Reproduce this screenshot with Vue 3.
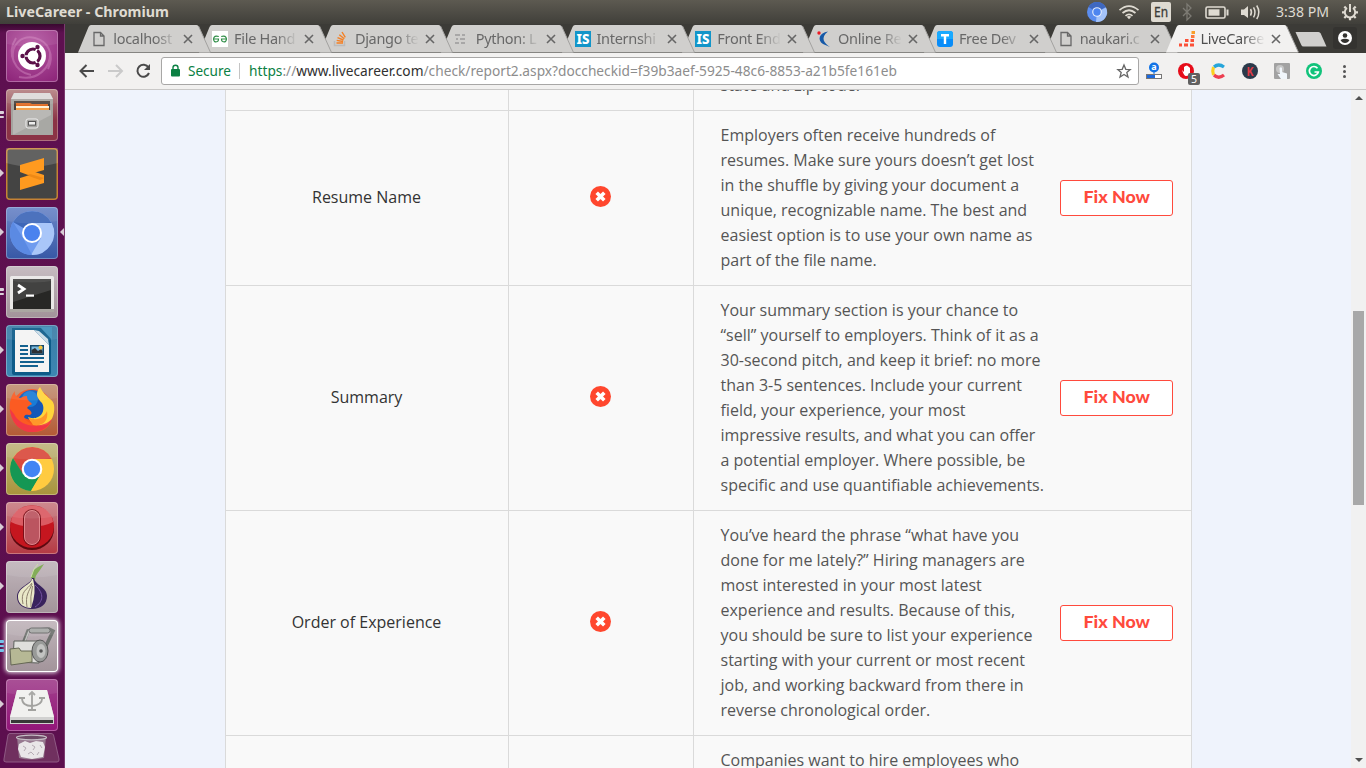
<script setup>
const tabs = [
  { title: 'localhost', icon: 'doc' },
  { title: 'File Hand', icon: 'gfg' },
  { title: 'Django te', icon: 'so' },
  { title: 'Python: L', icon: 'py' },
  { title: 'Internshi', icon: 'is' },
  { title: 'Front End', icon: 'is' },
  { title: 'Online Re', icon: 'online' },
  { title: 'Free Dev', icon: 'tee' },
  { title: 'naukari.c', icon: 'doc' },
  { title: 'LiveCaree', icon: 'live', active: true },
].map((t, i) => ({ ...t, style: { left: 13.3 + i * 120.8 + 'px', zIndex: t.active ? 30 : 20 - i } }))

const rows = [
  { name: '', lines: ['state and zip code.'] },
  {
    name: 'Resume Name',
    fix: true,
    lines: [
      'Employers often receive hundreds of',
      'resumes. Make sure yours doesn’t get lost',
      'in the shuffle by giving your document a',
      'unique, recognizable name. The best and',
      'easiest option is to use your own name as',
      'part of the file name.',
    ],
  },
  {
    name: 'Summary',
    fix: true,
    lines: [
      'Your summary section is your chance to',
      '“sell” yourself to employers. Think of it as a',
      '30-second pitch, and keep it brief: no more',
      'than 3-5 sentences. Include your current',
      'field, your experience, your most',
      'impressive results, and what you can offer',
      'a potential employer. Where possible, be',
      'specific and use quantifiable achievements.',
    ],
  },
  {
    name: 'Order of Experience',
    fix: true,
    lines: [
      'You’ve heard the phrase “what have you',
      'done for me lately?” Hiring managers are',
      'most interested in your most latest',
      'experience and results. Because of this,',
      'you should be sure to list your experience',
      'starting with your current or most recent',
      'job, and working backward from there in',
      'reverse chronological order.',
    ],
  },
  { name: '', lines: ['Companies want to hire employees who', ''] },
]

const apps = [
  { id: 'dash' },
  { id: 'files', run: 2 },
  { id: 'sublime', run: 1 },
  { id: 'chromium', run: 1, focus: true },
  { id: 'terminal', run: 2 },
  { id: 'writer', run: 1 },
  { id: 'firefox', run: 1 },
  { id: 'chrome', run: 1 },
  { id: 'opera', run: 1 },
  { id: 'tor', run: 1 },
  { id: 'scanner', run: 3 },
  { id: 'usb', run: 1 },
]
</script>

<template>
  <div class="desktop">
    <header class="panel">
      <svg class="wintitle" width="180" height="24">
        <text x="6" y="17" textLength="163" lengthAdjust="spacingAndGlyphs">LiveCareer - Chromium</text>
      </svg>
      <svg class="tray" width="286" height="24" viewBox="1080 0 286 24">
        <circle cx="1097" cy="12" r="10" fill="#5b8def" />
        <path d="M1097 12L1088.4 7A10 10 0 0 1 1105.7 7Z" fill="#3f68c0" />
        <path d="M1097 12L1106 7.5A10 10 0 0 1 1096 22Z" fill="#a4c3fa" />
        <circle cx="1097" cy="12" r="4.8" fill="#e8effd" />
        <circle cx="1097" cy="12" r="3.7" fill="#4d85f0" />
        <g fill="none" stroke="#dfdbd2" stroke-width="1.7">
          <path d="M1119.5 10.2Q1129 2.200 1138.500 10.200M1122.500 13Q1129 7.500 1135.500 13M1125.500 15.800Q1129 12.800 1132.500 15.800" />
        </g>
        <path d="M1126.700 16.800Q1129 15 1131.300 16.800L1129 19.300Z" fill="#dfdbd2" />
        <rect x="1151" y="2" width="20" height="20" rx="2" fill="#dfdbd2" />
        <text x="1154" y="17" font-size="13.500" fill="#3c3b37" stroke="#3c3b37" stroke-width=".3" textLength="14" lengthAdjust="spacingAndGlyphs">En</text>
        <path d="M1183 8L1191 16L1187 20V4L1191 8L1183 16" fill="none" stroke="#7d7b74" stroke-width="1.300" />
        <rect x="1206" y="7" width="19" height="11" rx="1.500" fill="none" stroke="#dfdbd2" stroke-width="1.600" />
        <rect x="1208.500" y="9.300" width="11" height="6.400" fill="#dfdbd2" />
        <rect x="1226.500" y="9.500" width="2" height="6" fill="#dfdbd2" />
        <path d="M1241 9.500H1244L1248 6V18L1244 15H1241Z" fill="#dfdbd2" />
        <path d="M1250.500 9Q1252.500 12.300 1250.500 15.600M1253.500 7.300Q1256.500 12.300 1253.500 17.300M1256.700 5.500Q1261 12.300 1256.700 19" fill="none" stroke="#dfdbd2" stroke-width="1.500" />
        <text x="1276" y="17" font-size="14.500" fill="#dfdbd2" textLength="53" lengthAdjust="spacingAndGlyphs">3:38 PM</text>
        <g fill="none" stroke="#dfdbd2">
          <path d="M1347 8A5.200 5.200 0 1 0 1353 8" stroke-width="2" />
          <path d="M1350 4V12" stroke-width="2" />
          <path d="M1344.300 6.600L1346 8.300M1355.700 6.600L1354 8.300M1342 12.300H1345M1355 12.300H1358M1344.300 18L1346 16.300M1355.700 18L1354 16.300M1350 17.500V20.300" stroke-width="2.200" />
        </g>
      </svg>
    </header>

    <div class="work">
      <aside class="launcher">
        <div v-for="a in apps" :key="a.id" class="tile" :class="a.id">
          <svg viewBox="0 0 52 52" width="52" height="52">
            <g v-if="a.id === 'dash'">
              <path d="M7 29C5 14 16 5 29 8C42 11 49 25 42 39M13 47C31 51 45 38 44 23M10 8C0 24 9 42 25 45" fill="none" stroke="#d48bc4" stroke-opacity=".45" stroke-width="2" />
              <circle cx="26" cy="26" r="14" fill="#fff" />
              <circle cx="27" cy="26" r="7" fill="none" stroke="#5b1049" stroke-width="3.200" />
              <path d="M27 26L16 26M27 26L32.500 16.500M27 26L32.500 35.500" stroke="#fff" stroke-width="1.600" />
              <circle cx="27" cy="26" r="5" fill="#fff" />
              <g fill="#5b1049"><circle cx="16.500" cy="26" r="2.200" /><circle cx="31.500" cy="17" r="2.200" /><circle cx="31.500" cy="35" r="2.200" /></g>
            </g>
            <g v-else-if="a.id === 'files'">
              <path d="M8 4H44L47 10V46H5V10Z" fill="#a5a39f" /><path d="M8 4H44L47 10H5Z" fill="#dddcd9" />
              <rect x="8" y="12" width="36" height="12" fill="#4b403b" />
              <path d="M10 14H24L26 15H42V24H10Z" fill="#e06a22" /><rect x="10" y="17" width="33" height="2" fill="#fff2d8" /><rect x="10" y="19" width="33" height="3" fill="#f5a04a" />
              <rect x="7" y="21" width="38" height="25" rx="1" fill="#b9b8b5" /><path d="M7 46L45 26V46Z" fill="#989794" opacity=".5" />
              <rect x="20" y="30" width="12" height="9" rx="2" fill="#a5a4a1" stroke="#efefef" /><rect x="22.500" y="32.500" width="7" height="3.600" fill="#eee" stroke="#555" />
            </g>
            <g v-else-if="a.id === 'sublime'">
              <path d="M0 0H52V15Q25 22 0 15Z" fill="#fff" opacity=".16" />
              <path d="M14 17L38 10V22L24 26L38 30V35L14 42V30L27 26L14 23Z" fill="#ff9a1f" />
              <path d="M14 17V24L38 33V27L26 23Z" fill="#ff9a1f" />
              <path d="M24 26L38 30L34 32L20 27Z" fill="#d9760b" opacity=".45" />
            </g>
            <g v-else-if="a.id === 'chromium'">
              <circle cx="26" cy="26" r="22" fill="#6f9bef" />
              <path d="M26 26L7 15A22 22 0 0 1 45.500 16H26Z" fill="#3d66b8" />
              <path d="M26 16H45.700A22 22 0 0 1 25 48L35 31Z" fill="#a9c6f9" />
              <path d="M7 15L17 31L26 48A22 22 0 0 1 7 15Z" fill="#5b8ae3" />
              <circle cx="26" cy="26" r="10" fill="#fff" /><circle cx="26" cy="26" r="8" fill="#4a82ee" />
            </g>
            <g v-else-if="a.id === 'terminal'">
              <rect x="4" y="10" width="44" height="36" rx="1.500" fill="#e9e8e6" /><rect x="4" y="43" width="44" height="3" fill="#aaa7a2" />
              <rect x="7" y="13" width="38" height="30" fill="#272725" /><path d="M7 13H45V24L7 36Z" fill="#fff" opacity=".13" />
              <path d="M12 19L18 23L12 27" fill="none" stroke="#fff" stroke-width="2.800" /><rect x="20" y="28.500" width="8" height="2.200" fill="#fff" />
            </g>
            <g v-else-if="a.id === 'writer'">
              <path d="M6 3H45V48Q45 50 43 50H8Q6 50 6 48Z" fill="#0d5b88" /><path d="M34 2H46V15Z" fill="#3d8fba" />
              <path d="M9 5H28L43 20V47H9Z" fill="#f4f4f3" /><path d="M28 5L43 20L42 14L33 6Z" fill="#c9dce7" />
              <path d="M14 21H22M14 25H22M14 29H22M14 33H38M14 37H38M14 41H32" stroke="#14628f" stroke-width="2" />
              <rect x="24" y="20" width="14" height="10" fill="#14496c" /><rect x="25.500" y="21.500" width="11" height="7" fill="#7cbcdf" /><path d="M25.500 28.500V25L29 23L32 26L35 24L36.500 26V28.500Z" fill="#2d3134" /><circle cx="34.500" cy="22.500" r="2" fill="#f5c23b" />
            </g>
            <g v-else-if="a.id === 'firefox'">
              <circle cx="26" cy="26" r="21" fill="#f5521f" />
              <circle cx="26" cy="21" r="15" fill="#1458b8" /><circle cx="24" cy="15" r="8" fill="#1a86dd" opacity=".8" />
              <path d="M9 7C4 13 3 21 4 28C7 42 16 48 27 48C35 48 42 45 45 38C34 43 24 41 19 35C17 32 19 30 23 31C27 31 26 27 22 25C20 23 23 22 26 20C24 17 21 17 21 12C17 12 15 14 14 14C10 13 8 10 9 7Z" fill="#fb5b22" />
              <path d="M34 3C28 10 32 15 36 19C39 24 37 31 32 33C28 35 24 34 22 33C26 42 36 43 42 40C47 35 49 28 48 21C47 14 40 15 34 3Z" fill="#ffd43a" />
              <path d="M4 25C5 40 16 49 27 48C36 48 43 43 46 35C35 46 14 43 8 30Z" fill="#ef304e" opacity=".8" />
              <path d="M22 33C30 38 38 34 41 27C43 37 36 43 27 41Z" fill="#ff982a" />
            </g>
            <g v-else-if="a.id === 'chrome'">
              <circle cx="26" cy="26" r="22" fill="#ffcb40" /><path d="M26 16L16 31L7 15A22 22 0 0 1 45.700 16Z" fill="#d94a3d" />
              <path d="M7 15L17 31L26 36L25 48A22 22 0 0 1 7 15Z" fill="#159754" /><path d="M35 31L25 48L21 34Z" fill="#159754" /><path d="M35 31L25 48L45 35Z" fill="#ffcb40" />
              <circle cx="26" cy="26" r="10.300" fill="#fff" /><circle cx="26" cy="26" r="8.200" fill="#4285f4" />
            </g>
            <g v-else-if="a.id === 'opera'">
              <ellipse cx="26" cy="27" rx="22" ry="21" fill="#5c0910" /><ellipse cx="26" cy="24.500" rx="22" ry="21.300" fill="#c5161f" />
              <path d="M5 20C8 -2 44 -2 47 20C36 26 16 26 5 20Z" fill="#e98b8f" opacity=".6" />
              <rect x="17" y="7" width="18" height="37" rx="9" fill="#7c0f18" /><rect x="18.500" y="8.500" width="15" height="34" rx="7.500" fill="#bb5560" stroke="#e0868c" />
            </g>
            <g v-else-if="a.id === 'tor'">
              <path d="M25 17C28 11 24 11 32 6L38 3L34 9C31 13 29 15 29 19Z" fill="#79a74b" /><path d="M25 16L28 8L32 3" stroke="#c7dfa2" fill="none" />
              <path d="M26 17C26 23 11 25 11 36C11 44 18 48 26 48C35 48 41 43 41 35C41 26 29 24 28 17Z" fill="#39235d" />
              <path d="M26 18C25 24 12 26 12 36C12 43 18 47 25 47Q31 31 27 18Z" fill="#e9e8c8" />
              <path d="M26 22C21 29 14 30 17 43M26 23C23 31 19 34 21 46M26.500 25Q24 36 25 46" fill="none" stroke="#8d806e" />
              <path d="M29 24C39 33 37 41 29 46" fill="none" stroke="#7453a4" />
            </g>
            <g v-else-if="a.id === 'scanner'">
              <path d="M17 24L22 11L43 9L47 11L38 30" fill="none" stroke="#6e716e" stroke-width="3.500" /><path d="M18 24L23 11H44" fill="none" stroke="#bfc1be" stroke-width="1.500" />
              <rect x="23" y="8" width="21" height="5" rx="2.500" fill="#a7a9a6" stroke="#666" />
              <path d="M8 21H33V43L7 42Z" fill="#dfdfdc" stroke="#5c605b" /><path d="M4 29L13 28L15 31H26V42L5 45Z" fill="#b6b895" stroke="#666855" />
              <ellipse cx="34" cy="31" rx="8" ry="11" fill="#989a98" stroke="#555" /><ellipse cx="35" cy="31" rx="4.500" ry="7" fill="#c2c3c1" /><circle cx="35" cy="31" r="1.800" fill="#555" />
            </g>
            <g v-else>
              <path d="M11 11H41L48 38V45H4V38Z" fill="#d1d1d0" /><path d="M11 11H41L48 38H4Z" fill="#f1f1ef" /><rect x="5" y="41" width="42" height="3" fill="#373737" />
              <g fill="none" stroke="#a2a29f" stroke-width="1.800"><path d="M26 14V31M26 27Q16 27 16 19M26 27Q36 26 36 20M23 16L26 13L29 16" /><path d="M22 31H30M13 19H19M33 19H39" /></g>
            </g>
            <path v-if="a.id !== 'sublime'" d="M1 1H51V14Q26 19 1 14Z" fill="#fff" opacity=".08" />
          </svg>
          <i v-if="a.run === 1" class="arrow"></i>
          <i v-else-if="a.run" class="pips" :class="{ three: a.run === 3 }"><b v-for="n in a.run" :key="n"></b></i>
          <i v-if="a.focus" class="focus"></i>
        </div>
        <svg class="trash" width="58" height="30" viewBox="0 0 58 30">
          <path d="M7 0.500H48Q50 .5 50.500 2L56 26Q56.500 29 54 29H3Q0 29 1 26L5 2Q5.500 .5 7 .5Z" fill="#70305f" stroke="#8f5a84" />
          <path d="M14 4L16 25Q28 28 41 25L43 4Z" fill="#a491a0" opacity=".75" />
          <path d="M16 11L22 8L27 10L33 8L40 9L42 14L40 24L29 26L18 24L15 16Z" fill="#e9e6e8" />
          <path d="M20 13L23 15L21 18M29 12L32 14L30 17M25 21L28 19L31 22M36 19L34 22M37 12L39 15" fill="none" stroke="#b5abb3" />
          <ellipse cx="28.500" cy="4.500" rx="15" ry="2.300" fill="#6c4a65" stroke="#c5bdc4" stroke-width="1.200" />
        </svg>
      </aside>

      <main class="browser">
        <div class="tabstrip">
          <div v-for="(t, i) in tabs" :key="i" class="tab" :class="{ active: t.active }" :style="t.style">
            <svg class="shape" width="134" height="29" viewBox="0 0 134 29">
              <path class="fill" d="M0 28.500L10.500 3Q11.500 1 13 1H118.500Q120.200 1 121 3L132.500 28.500Z" />
              <path class="edge" d="M120.500 2L132.300 28" />
            </svg>
            <div class="tabrow">
              <svg class="fav" width="16" height="16" viewBox="0 0 16 16">
                <path v-if="t.icon === 'doc'" d="M3 1.500H9.500L13 5V14.500H3ZM9.500 1.500V5H13" fill="none" stroke="#676767" stroke-width="1.300" />
                <g v-else-if="t.icon === 'gfg'"><rect width="16" height="16" fill="#fff" /><path d="M6.800 5.500Q2 4 1.500 8Q2 12 5.500 10.500Q6.500 10 6.500 8H1M9.200 5.500Q14 4 14.500 8Q14 12 10.500 10.500Q9.500 10 9.500 8H15" fill="none" stroke="#2f8d46" stroke-width="1.200" /></g>
                <g v-else-if="t.icon === 'so'" fill="none"><path d="M1.500 10V14.500H11.500V10" stroke="#bcbbbb" stroke-width="1.500" /><path d="M3.500 12H10M3.700 9.400L10 10.500M4.500 6.600L10.500 9M6.300 3.700L11.300 7.800M9 1L12.300 6.400" stroke="#f48024" stroke-width="1.400" /></g>
                <path v-else-if="t.icon === 'py'" d="M1 4H6M8 4H11M2 8H4M6 8H11M1 12H5M7 12H11" stroke="#9b9b9b" stroke-width="1.700" />
                <g v-else-if="t.icon === 'is'"><rect width="16" height="16" fill="#1295c9" /><text x="1.500" y="13.200" font-size="14" font-weight="800" fill="#fff" textLength="13" lengthAdjust="spacingAndGlyphs">IS</text></g>
                <g v-else-if="t.icon === 'online'"><path d="M12 .5C3 2 1 9 7 13L14 16C8 12 4 7 12 .5Z" fill="#1559a8" /><circle cx="3" cy="2" r="1.700" fill="#ee1b24" /></g>
                <g v-else-if="t.icon === 'tee'"><rect width="16" height="16" rx="3" fill="#088cf8" /><path d="M0 8V3Q0 0 3 0H13Q16 0 16 3V8Z" fill="#19aaff" /><path d="M4 4.300H12M8 4V13" stroke="#fff" stroke-width="2.400" /></g>
                <g v-else fill="#fb5037"><rect y="12.500" width="3" height="3" /><rect x="5" y="12.500" width="4" height="3" /><rect x="6" y="8" width="3.500" height="3" /><rect x="11" y="12.500" width="4" height="3" /><rect x="11.500" y="8" width="3.500" height="3" /><rect x="12" y="4" width="3.500" height="3" fill="#fb793b" /><rect x="12.500" y="0" width="3.500" height="3" fill="#f99e28" /></g>
              </svg>
              <span class="tabtitle">{{ t.title }}</span>
              <svg class="close" width="10" height="10" viewBox="0 0 10 10"><path d="M1 1L9 9M9 1L1 9" stroke="#666" stroke-width="1.600" /></svg>
            </div>
          </div>
          <svg class="newtab" width="34" height="17" viewBox="0 0 34 17"><path d="M1.500 1H24.500Q26 1 26.700 2.500L32.500 15.500H9.500Q8 15.500 7.300 14Z" fill="#d0cfcd" /></svg>
          <div class="avatar">
            <svg width="16" height="16" viewBox="0 0 16 16"><circle cx="8" cy="8" r="7" fill="#fff" /><circle cx="8" cy="5.500" r="2.300" fill="#343330" /><path d="M3.500 10Q8 7.500 12.500 10Q11 13 8 13Q5 13 3.500 10Z" fill="#343330" /></svg>
          </div>
        </div>

        <div class="toolbar">
          <svg class="nav" width="96" height="36" viewBox="0 0 96 36">
            <path d="M29 18H16M21.500 12L15.500 18L21.500 24" fill="none" stroke="#4a4a4a" stroke-width="2" />
            <path d="M43 18H56M51 12L57 18L51 24" fill="none" stroke="#cacaca" stroke-width="2" />
            <path d="M83.500 14.500A6 6 0 1 0 84 20" fill="none" stroke="#4a4a4a" stroke-width="2" /><path d="M85 11V17H79Z" fill="#4a4a4a" />
          </svg>
          <div class="omnibox">
            <svg width="976" height="26" viewBox="162 58 976 26">
              <rect x="171" y="69" width="9" height="7.500" rx="1" fill="#0b8043" /><path d="M173 69V67.500Q173 65.300 175.500 65.300Q178 65.300 178 67.500V69" fill="none" stroke="#0b8043" stroke-width="1.400" />
              <g font-size="14.500">
                <text x="188" y="76" fill="#0b8043" textLength="43" lengthAdjust="spacingAndGlyphs">Secure</text>
                <text x="249" y="76" textLength="648" lengthAdjust="spacingAndGlyphs" fill="#8d8d8d"><tspan fill="#0b8043">https</tspan>://<tspan fill="#303030">www.livecareer.com</tspan>/check/report2.aspx?doccheckid=f39b3aef-5925-48c6-8853-a21b5fe161eb</text>
              </g>
              <path d="M239.500 63V79" stroke="#c4c4c4" />
              <path d="M1124 65L1125.800 69.300L1130.200 69.600L1126.800 72.500L1128 77L1124 74.500L1120 77L1121.200 72.500L1117.800 69.600L1122.200 69.300Z" fill="none" stroke="#666" stroke-width="1.300" />
            </svg>
          </div>
          <svg class="ext" width="227" height="36" viewBox="1139 53 227 36">
            <circle cx="1154" cy="67.500" r="5" fill="#1173e6" /><text x="1151.200" y="70.300" font-size="9" font-weight="700" fill="#fff">a</text><path d="M1154 72V75" stroke="#1173e6" />
            <rect x="1146.500" y="74.500" width="15" height="4" fill="#fff" stroke="#777" /><rect x="1147" y="75" width="8" height="3" fill="#1d69dc" />
            <circle cx="1186" cy="71" r="8" fill="#e60c19" /><path d="M1182 70L1184 72V67L1185.500 66L1187 65.500L1189 67L1190 68V73Q1189 76 1186 76Q1184 76 1182 70Z" fill="#fff" />
            <rect x="1188" y="73" width="12" height="12" rx="2" fill="#606060" /><text x="1191" y="83" font-size="10.500" fill="#fff">5</text>
            <g fill="none" stroke-width="3.200"><path d="M1213.500 67Q1212 71 1213.500 75" stroke="#fbd01e" /><path d="M1214 67Q1218.500 63 1224 67" stroke="#26a5da" /><path d="M1214 75Q1218.500 79.500 1224 75" stroke="#ed4051" /></g>
            <circle cx="1250" cy="71" r="8" fill="#2b3a4b" /><text x="1246.600" y="75.800" font-size="13" font-weight="700" fill="#e03b46" textLength="7" lengthAdjust="spacingAndGlyphs">K</text>
            <rect x="1274" y="63" width="16" height="16" rx="1" fill="#a2a2a2" /><circle cx="1280" cy="69" r="4" fill="#c6c6c6" /><path d="M1279.500 68Q1281 66.500 1282 68V72L1287 73.500V79H1281L1277.500 74L1280 74Z" fill="#f1f6fb" />
            <circle cx="1314" cy="71" r="8" fill="#11c37b" /><path d="M1317.500 68.300A4.500 4.500 0 1 0 1318.300 72H1314.500" fill="none" stroke="#fff" stroke-width="1.700" />
            <g fill="#555"><circle cx="1344.500" cy="66.500" r="1.500" /><circle cx="1344.500" cy="71.500" r="1.500" /><circle cx="1344.500" cy="76.500" r="1.500" /></g>
          </svg>
        </div>

        <div class="page">
          <div class="sheet">
            <div v-for="(r, i) in rows" :key="i" class="row">
              <div class="name">{{ r.name }}</div>
              <div class="status">
                <svg v-if="r.fix" width="21" height="21" viewBox="0 0 21 21"><circle cx="10.500" cy="10.500" r="10.500" fill="#ff472e" /><path d="M6.700 6.700L14.300 14.300M14.300 6.700L6.700 14.300" stroke="#fff" stroke-width="3.600" /></svg>
              </div>
              <div class="advice">
                <p><span v-for="l in r.lines" :key="l">{{ l }}</span></p>
                <button v-if="r.fix">
                  <svg width="68" height="20"><text x="0.500" y="15" textLength="66.500" lengthAdjust="spacingAndGlyphs">Fix Now</text></svg>
                </button>
              </div>
            </div>
          </div>
          <div class="scroll">
            <i class="up"></i>
            <div class="thumb"></div>
            <i class="down"></i>
          </div>
        </div>
      </main>
    </div>
  </div>
</template>

<style>
body { margin: 0; overflow: hidden; }
</style>

<style scoped>
.desktop { width: 1366px; height: 768px; overflow: hidden; display: flex; flex-direction: column; font-family: "Noto Sans", sans-serif; background: #3c3b37; }
svg { display: block; flex: none; }
.panel { height: 24px; flex: none; display: flex; justify-content: space-between; background: linear-gradient(#5d5a51, #403f3a); }
.wintitle text { font-size: 14px; font-weight: 700; fill: #dfdbd2; }
.work { flex: 1; min-height: 0; display: flex; }

.launcher { width: 65px; box-sizing: border-box; border-right: 1px solid #7b3a6f; flex: none; display: flex; flex-direction: column; gap: 7px; padding-top: 6px; background: linear-gradient(#390830, #5e1050 9px, #5c0f4e); }
.tile { position: relative; width: 52px; height: 52px; margin-left: 6px; flex: none; border-radius: 4px; box-shadow: inset 0 0 0 1px rgba(255, 255, 255, .3); }
.dash { background: radial-gradient(circle at 50% 30%, #b75aa4, #8b2277); }
.files { background: linear-gradient(#b58484, #8b3346 60%); }
.sublime { background: #444443; box-shadow: inset 0 0 0 1.500px #c58335; }
.chromium { background: linear-gradient(#6c87c8, #3758a6); }
.terminal, .tor, .scanner { background: linear-gradient(#c1b6bc, #a2949a); }
.writer { background: linear-gradient(#3b7ca7, #3c87b3); }
.firefox { background: linear-gradient(#c39276, #b45a35); }
.chrome { background: linear-gradient(#c1b680, #a8943b); }
.opera { background: linear-gradient(#c98086, #b43a43); }
.scanner { box-shadow: inset 0 0 0 1px #fff, 0 0 4px 1px #e8dfe7; }
.usb { background: linear-gradient(#a2418d, #921579); }
.arrow, .focus { position: absolute; top: 21px; left: -6px; border: 4.500px solid transparent; border-left-color: #d8ccd5; border-right-width: 0; }
.focus { left: auto; right: -6px; border-left-width: 0; border-right: 4.500px solid #d8ccd5; }
.pips { position: absolute; left: -6px; top: 22px; display: grid; gap: 2px; }
.pips b { width: 4px; height: 2.500px; background: #dcd2da; border-radius: 0 1px 1px 0; }
.pips.three { top: 20px; }
.pips.three b { background: #75c3ea; }
.trash { margin: -5px 0 0 3px; }

.browser { flex: 1; min-width: 0; display: flex; flex-direction: column; }
.tabstrip { position: relative; height: 29px; flex: none; background: #3c3b37; }
.tab { position: absolute; top: 0; width: 134px; height: 29px; }
.shape { position: absolute; inset: 0; }
.fill { fill: #d0cfcd; }
.edge { fill: none; stroke: #a3a2a0; stroke-width: 1; }
.active .fill { fill: #f2f1f0; }
.tabrow { position: relative; height: 28px; display: flex; align-items: center; padding: 1px 0 0 13px; box-sizing: border-box; }
.tabtitle { width: 64px; margin: -2px 0 0 6px; overflow: hidden; white-space: nowrap; font-size: 14.500px; letter-spacing: -.3px; color: #686868; -webkit-mask-image: linear-gradient(90deg, #000 66%, transparent); mask-image: linear-gradient(90deg, #000 66%, transparent); }
.active .tabtitle { color: #505050; }
.close { margin-left: 6px; }
.newtab { position: absolute; left: 1229px; top: 7px; }
.avatar { position: absolute; left: 1268px; top: 3px; width: 24px; height: 22px; border-radius: 3px; background: #343330; display: grid; place-items: center; }
.toolbar { height: 36px; flex: none; display: flex; align-items: center; background: #f2f1f0; border-bottom: 1px solid #c9c8c7; }
.omnibox { width: 976px; height: 26px; border: 1px solid #a8a7a6; border-radius: 3px; background: #fff; flex: none; }

.page { flex: 1; min-height: 0; display: flex; justify-content: space-between; background: #eff3fc; overflow: hidden; }
.sheet { width: 965px; height: 900px; margin: -29px 0 0 160px; border: 1px solid #dadada; border-top: 0; background: #f9f9f9; font-family: "Open Sans", sans-serif; font-size: 16px; line-height: 25px; }
.row { display: grid; grid-template-columns: 283px 185px 497px; border-bottom: 1px solid #dadada; }
.name, .status { border-right: 1px solid #dadada; display: flex; align-items: center; justify-content: center; color: #333; padding: 0 1px 2px 0; }
.status { padding: 0 2px 3px 0; }
.advice { display: flex; align-items: center; padding: 12px 0 12px 26.500px; color: #555; }
.advice p { margin: 0; width: 339.500px; white-space: nowrap; }
.advice span { display: block; min-height: 25px; }
button { width: 113px; height: 36px; padding: 0; border: 1px solid #ff4a3d; border-radius: 3px; background: #fff; display: grid; place-items: center; }
button text { font-family: Lato, sans-serif; font-size: 17.500px; font-weight: 900; fill: #ff4a3d; }
.scroll { width: 15px; background: #f1f1f1; display: flex; flex-direction: column; align-items: center; }
.scroll i { width: 0; border: 4px solid transparent; flex: none; }
.scroll .up { border-bottom-color: #505050; border-top-width: 0; margin-top: 6px; }
.thumb { width: 11px; height: 194px; margin-top: 211px; background: #a8a8a8; }
.scroll .down { border-top-color: #505050; border-bottom-width: 0; margin-top: auto; margin-bottom: 6px; }
</style>
